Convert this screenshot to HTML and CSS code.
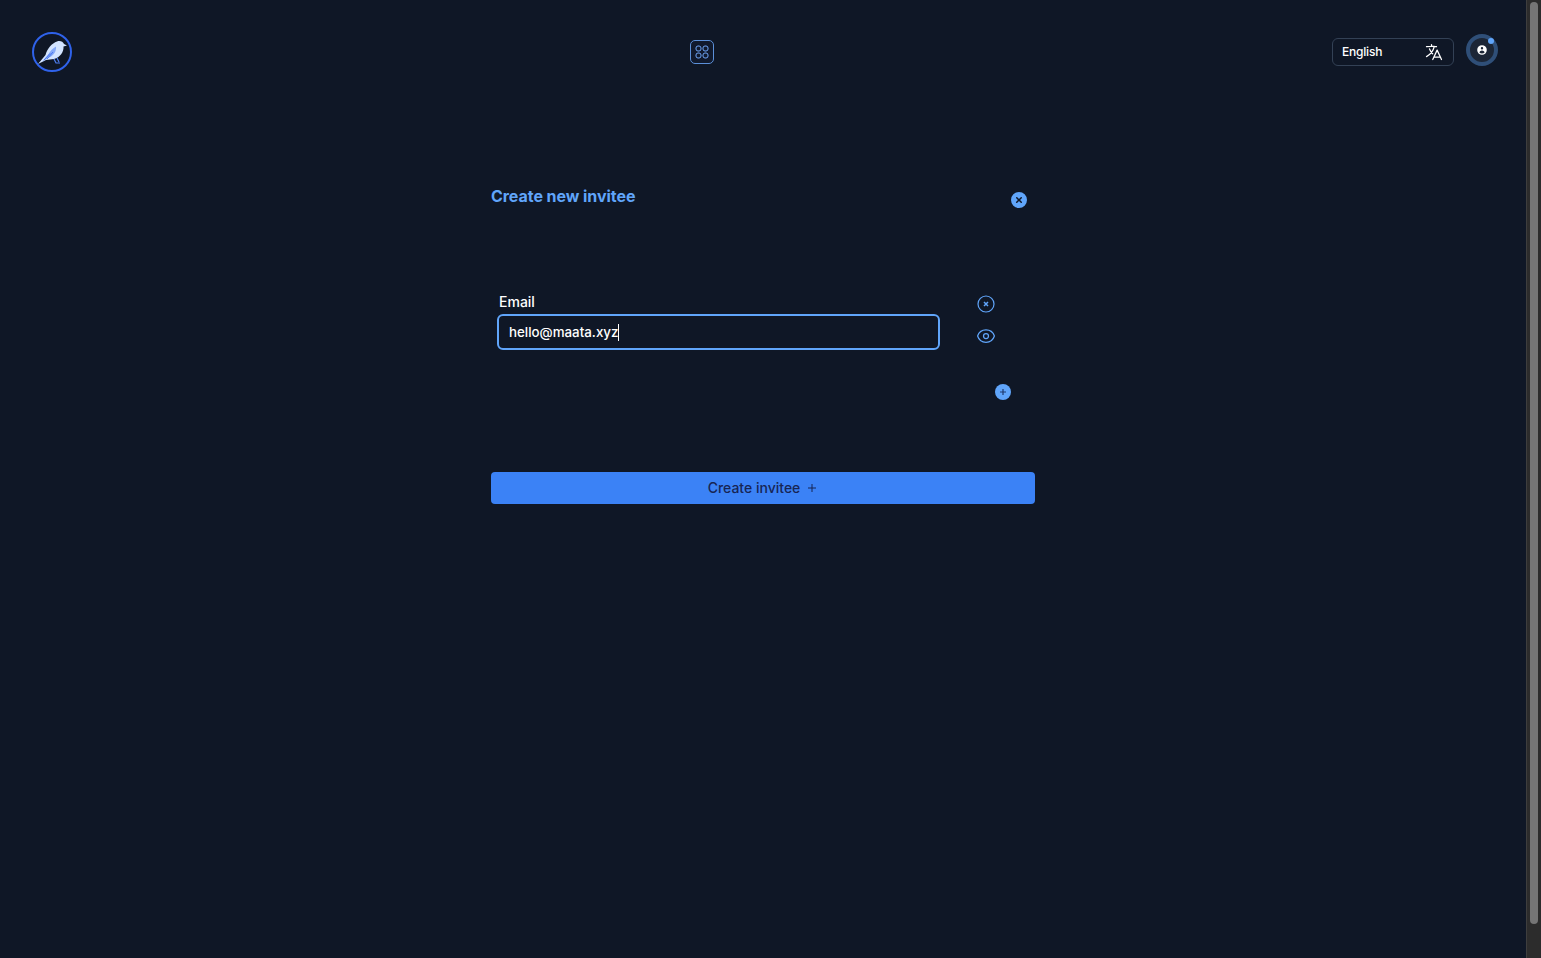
FILE: index.html
```html
<!DOCTYPE html>
<html>

<head>
	<title>Create new invitee</title>
	<link rel="stylesheet" href="styles.css">
</head>

<body>
	<div class="app">
		<div class="main">
			<header class="topbar">
				<a class="logo" href="#">
					<svg width="40" height="40" viewBox="0 0 40 40" fill="none">
						<circle cx="20" cy="20" r="19" stroke="#2f62ea" stroke-width="2" />
						<path d="M6 32 L13.500 23 C15 17 20 11 25 9.500 C28 8.500 31 9.500 32 12 L35 13.500 L31.500 14.500 C32 20 28 25.500 22 27 L14 28 Z" fill="#d3e4ff" />
						<path d="M10 30 L16 23 C18 19 21 16 24 14.500 C24.500 19 22 23.500 17 25.500 Z" fill="#86aaf8" />
						<path d="M12 28 L18 21.500 M15 27 L21 20" stroke="#3f6ff0" stroke-width="0.900" />
						<path d="M22 27 L24 31 L28 31 M25 26 L27 30" stroke="#4f7ff2" stroke-width="1.200" />
					</svg>
				</a>
				<button class="apps-btn">
					<svg width="14" height="14" viewBox="0 0 14 14" fill="none" stroke="#6ea4f5" stroke-width="1">
						<rect x="1" y="1" width="5" height="5" rx="2" />
						<rect x="8" y="1" width="5" height="5" rx="2" />
						<rect x="1" y="8" width="5" height="5" rx="2" />
						<rect x="8" y="8" width="5" height="5" rx="2" />
					</svg>
				</button>
				<div class="topbar-right">
					<div class="lang-select">
						<span>English</span>
						<svg width="20" height="20" viewBox="0 0 24 24" fill="none" stroke="#fff" stroke-width="1.500" stroke-linecap="round" stroke-linejoin="round">
							<path d="M10.500 21l5.250-11.250L21 21m-9-3h7.500M3 5.621a48.474 48.474 0 016-.371m0 0c1.120 0 2.233.038 3.334.114M9 5.250V3m3.334 2.364C11.176 10.658 7.690 15.080 3 17.502m9.334-12.138c.896.061 1.785.147 2.666.257m-4.589 8.495a18.023 18.023 0 01-3.827-5.802" />
						</svg>
					</div>
					<div class="avatar">
						<svg width="12" height="12" viewBox="0 0 20 20" fill="#fff">
							<path fill-rule="evenodd" d="M18 10a8 8 0 11-16 0 8 8 0 0116 0zm-6-3a2 2 0 11-4 0 2 2 0 014 0zm-2 4a5 5 0 00-4.546 2.916A5.986 5.986 0 0010 16a5.986 5.986 0 004.546-2.084A5 5 0 0010 11z" clip-rule="evenodd" />
						</svg>
						<span class="avatar-dot"></span>
					</div>
				</div>
			</header>

			<section class="panel">
				<div class="panel-head">
					<h2>Create new invitee</h2>
					<svg class="close-icon" width="20" height="20" viewBox="0 0 20 20" fill="#60a5fa">
						<path fill-rule="evenodd" d="M10 18a8 8 0 100-16 8 8 0 000 16zM8.280 7.220a.75.75 0 00-1.060 1.060L8.940 10l-1.720 1.720a.75.75 0 101.060 1.060L10 11.060l1.720 1.720a.75.75 0 101.060-1.060L11.060 10l1.720-1.720a.75.75 0 00-1.060-1.060L10 8.940 8.280 7.220z" clip-rule="evenodd" />
					</svg>
				</div>

				<div class="field-row">
					<div class="field">
						<label for="email">Email</label>
						<div class="input-box"><span id="email">hello@maata.xyz</span><i class="caret"></i></div>
					</div>
					<div class="field-actions">
						<svg width="20" height="20" viewBox="0 0 20 20" fill="none" stroke="#60a5fa" stroke-width="1.200">
							<circle cx="10" cy="10" r="8" />
							<path d="M8 8l4 4m0-4l-4 4" stroke-width="1.500" />
						</svg>
						<svg width="20" height="20" viewBox="0 0 24 24" fill="none" stroke="#60a5fa" stroke-width="1.500" stroke-linecap="round" stroke-linejoin="round">
							<path d="M2.036 12.322a1.012 1.012 0 010-.639C3.423 7.510 7.360 4.500 12 4.500c4.638 0 8.573 3.007 9.963 7.178.07.207.07.431 0 .639C20.577 16.490 16.640 19.500 12 19.500c-4.638 0-8.573-3.007-9.963-7.178z" />
							<circle cx="12" cy="12" r="3" />
						</svg>
					</div>
				</div>

				<div class="add-row">
					<svg width="20" height="20" viewBox="0 0 20 20">
						<circle cx="10" cy="10" r="8" fill="#60a5fa" />
						<path d="M10 7v6M7 10h6" stroke="#1e3a6e" stroke-width="1.200" />
					</svg>
				</div>

				<button class="submit-btn">
					Create invitee
					<svg width="12" height="12" viewBox="0 0 12 12" fill="none" stroke="#172554" stroke-width="1">
						<path d="M6 2v8M2 6h8" />
					</svg>
				</button>
			</section>
		</div>

		<div class="scrollbar">
			<div class="scrollbar-thumb"></div>
		</div>
	</div>
</body>

</html>
```

FILE: styles.css
```css
* {
	box-sizing: border-box;
}

html,
body {
	height: 100%;
	margin: 0;
	overflow: hidden;
}

body {
	background: #0f1726;
	color: #fff;
	font-family: Inter, "Liberation Sans", sans-serif;
	font-size: 14px;
}

.app {
	display: flex;
	height: 100%;
}

.main {
	flex: 1;
	min-width: 0;
}

.topbar {
	display: flex;
	align-items: center;
	justify-content: space-between;
	height: 104px;
	padding: 0 28px 0 32px;
}

.logo {
	display: flex;
	width: 40px;
	height: 40px;
}

.apps-btn {
	display: flex;
	align-items: center;
	justify-content: center;
	width: 24px;
	height: 24px;
	padding: 0;
	background: #111a2d;
	border: 1px solid #5b8fd8;
	border-radius: 5px;
}

.topbar-right {
	display: flex;
	align-items: center;
	gap: 12px;
}

.lang-select {
	display: flex;
	align-items: center;
	justify-content: space-between;
	width: 122px;
	height: 28px;
	padding: 0 9px;
	border: 1px solid #334155;
	border-radius: 6px;
	font-size: 12px;
	font-weight: 500;
	letter-spacing: -0.2px;
}

.lang-select span {
	padding-bottom: 2px;
}

.avatar {
	position: relative;
	display: flex;
	align-items: center;
	justify-content: center;
	width: 32px;
	height: 32px;
	margin-top: -4px;
	background: #1c2636;
	border: 4px solid #2f4f78;
	border-radius: 50%;
}

.avatar-dot {
	position: absolute;
	top: 0;
	right: 0;
	width: 6px;
	height: 6px;
	background: #60a5fa;
	border-radius: 50%;
}

.panel {
	width: 544px;
	margin: 0 auto;
}

.panel-head {
	display: flex;
	justify-content: space-between;
	height: 184px;
	padding: 82px 6px 0 0;
}

.panel-head h2 {
	margin: 0;
	color: #60a5fa;
	font-size: 16px;
	font-weight: 700;
	line-height: 20px;
	letter-spacing: -0.05px;
}

.close-icon {
	margin-top: 4px;
}

.field-row {
	display: flex;
	padding-left: 6px;
}

.field {
	width: 443px;
}

.field label {
	display: block;
	padding-left: 2px;
	font-size: 14px;
	font-weight: 500;
	line-height: 20px;
	margin-top: 4px;
	margin-bottom: 2px;
}

.input-box {
	display: flex;
	align-items: center;
	height: 36px;
	padding: 0 10px;
	border: 2px solid #60a5fa;
	border-radius: 6px;
	font-size: 13.333px;
	font-weight: 500;
}

.caret {
	width: 1px;
	height: 17px;
	background: #fff;
}

.field-actions {
	display: flex;
	flex-direction: column;
	gap: 12px;
	padding: 6px 0 0 36px;
}

.add-row {
	display: flex;
	justify-content: flex-end;
	padding: 32px 22px 0 0;
}

.submit-btn {
	display: flex;
	align-items: center;
	justify-content: center;
	gap: 6px;
	width: 100%;
	height: 32px;
	margin-top: 70px;
	padding: 0 0 2px;
	background: #3b82f6;
	border: none;
	border-radius: 4px;
	color: #172554;
	font-family: inherit;
	font-size: 14px;
	font-weight: 500;
}

.submit-btn svg {
	margin-top: 2px;
}

.scrollbar {
	width: 15px;
	padding: 2px 3px 0;
	background: #2c2c2c;
	border-left: 1px solid #3e3e3e;
}

.scrollbar-thumb {
	height: 922px;
	background: #757575;
	border-radius: 4px;
}
```
